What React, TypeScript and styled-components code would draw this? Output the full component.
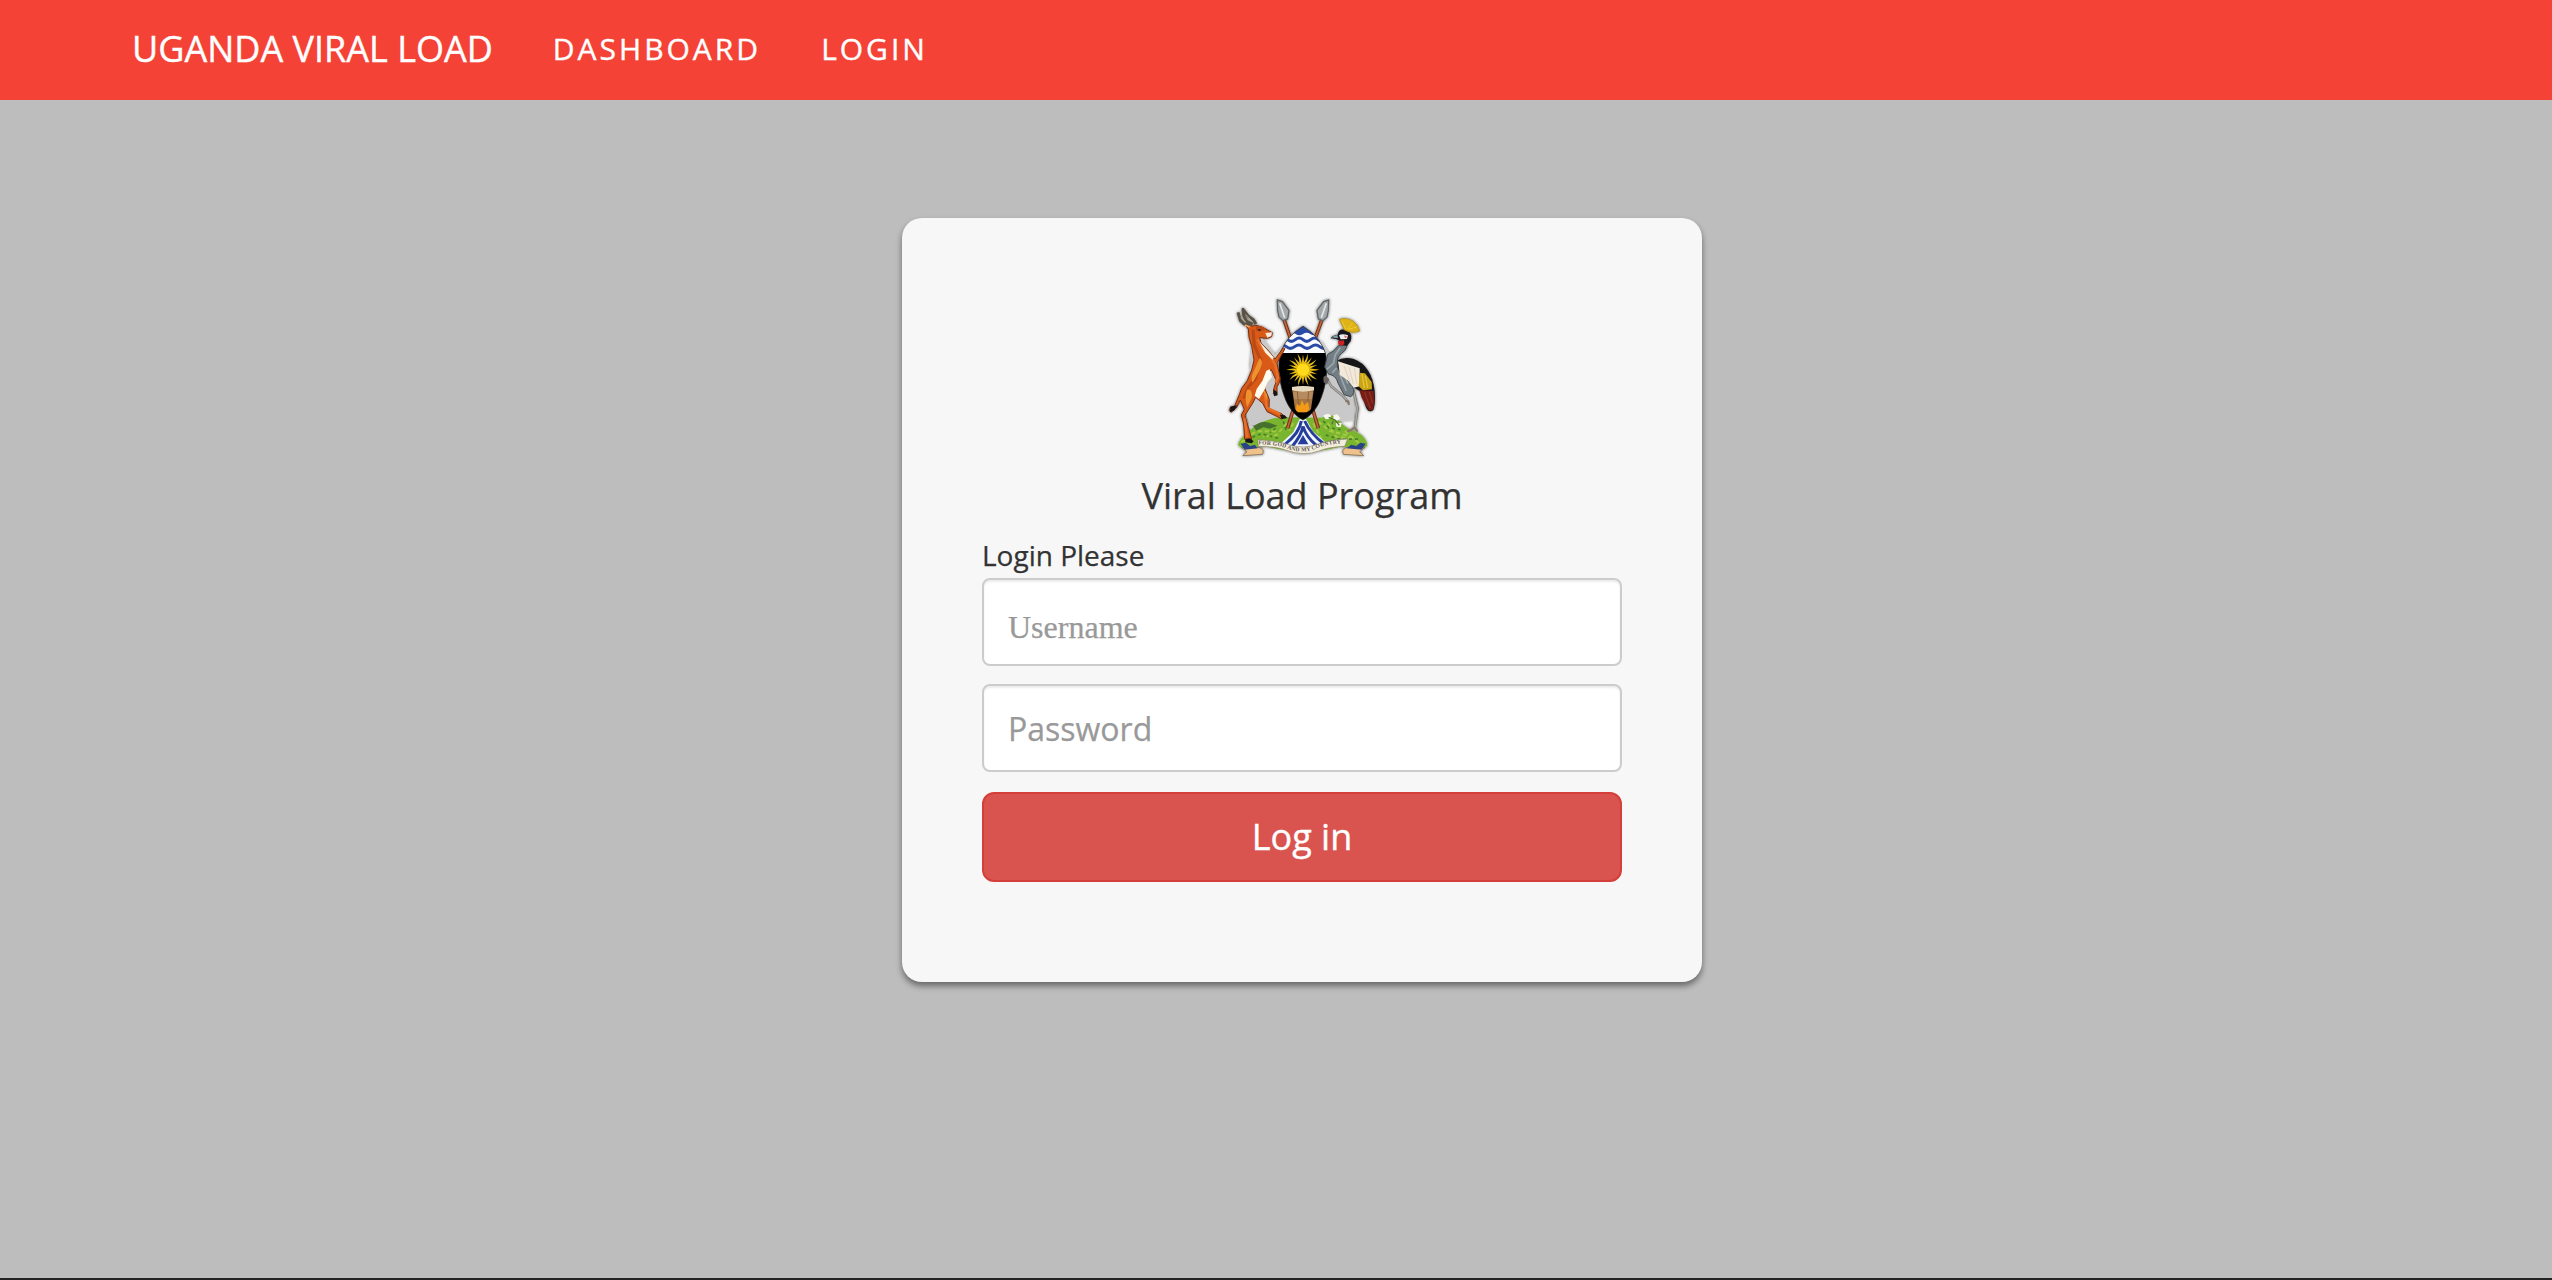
import React from 'react';
import styled, { createGlobalStyle } from 'styled-components';

const GlobalStyle = createGlobalStyle`
  * { box-sizing: border-box; }
  html, body { margin: 0; padding: 0; background: #bdbdbd; }
  body { font-family: "Open Sans", "Noto Sans", sans-serif; color: #333; }
`;

const Page = styled.div`
  height: 1280px;
  display: flex;
  flex-direction: column;
  background: #bdbdbd;
  border-bottom: 2px solid #242424;
`;

const Navbar = styled.nav`
  height: 100px;
  flex: none;
  display: flex;
  align-items: center;
  padding: 0 0 2px 132px;
  background: #f44336;
  -webkit-text-stroke: 0.4px #fff;
`;

const Brand = styled.a`
  color: #fff;
  font-size: 36px;
  line-height: 50px;
  margin-right: 60px;
  white-space: nowrap;
`;

const NavLinks = styled.div`
  display: flex;
  gap: 60px;
`;

const NavLink = styled.a`
  color: #fff;
  font-size: 30px;
  line-height: 42px;
  letter-spacing: 3px;
`;

const Main = styled.main`
  display: flex;
  justify-content: center;
  padding: 118px 0 0 52px;
`;

const Card = styled.section`
  width: 800px;
  height: 764px;
  padding: 82px 80px 0;
  display: flex;
  flex-direction: column;
  background: #f7f7f7;
  border-radius: 20px;
  box-shadow: 0 4px 6px rgba(0, 0, 0, 0.45);
`;

const Crest = styled.svg`
  display: block;
  align-self: center;
  width: 146px;
  height: 156px;
  overflow: visible;
`;

const Title = styled.h1`
  margin: 15px 0 14px;
  font-size: 36px;
  font-weight: 400;
  line-height: 50px;
  text-align: center;
  -webkit-text-stroke: 0.25px #333;
`;

const Hint = styled.p`
  margin: 0 0 3px;
  font-size: 28px;
  line-height: 40px;
  -webkit-text-stroke: 0.25px #333;
`;

const Field = styled.input<{ $serif?: boolean }>`
  width: 100%;
  height: 88px;
  margin: 0 0 ${(p) => (p.$serif ? 18 : 20)}px;
  padding: ${(p) => (p.$serif ? 10 : 0)}px 24px 0;
  border: 2px solid #ccc;
  border-radius: 8px;
  background: #fff;
  box-shadow: inset 0 2px 2px rgba(0, 0, 0, 0.075);
  font-family: ${(p) => (p.$serif ? '"Liberation Serif", serif' : '"Open Sans", sans-serif')};
  font-size: 32px;
  outline: none;
  &::placeholder { color: #999; opacity: 1; -webkit-text-stroke: 0.25px #999; }
`;

const Submit = styled.button`
  height: 90px;
  padding: 0;
  border: 2px solid #d43f3a;
  border-radius: 12px;
  background: #d9534f;
  color: #fff;
  font-family: inherit;
  font-size: 36px;
  line-height: 50px;
  -webkit-text-stroke: 0.4px #fff;
`;

const rays = Array.from({ length: 20 }, (_, i) => i * 18);

function CoatOfArms() {
  return (
    <Crest viewBox="57 45 438 468" role="img" aria-label="Coat of arms">
      <defs>
        <clipPath id="shield">
          <path d="M279 124C308 142 334 168 346 204C356 245 350 300 330 347C318 374 300 394 279 405C258 394 240 374 228 347C208 300 201 245 211 204C224 168 250 142 279 124Z" />
        </clipPath>
        <path id="motto" d="M145 478Q210 480 235 492Q280 509 325 488Q350 478 410 473" />
        <filter id="soft" x="-10%" y="-10%" width="120%" height="120%">
          <feGaussianBlur in="SourceAlpha" stdDeviation="4" result="halo" />
          <feComponentTransfer in="halo" result="edge">
            <feFuncA type="linear" slope="0.6" />
          </feComponentTransfer>
          <feGaussianBlur in="SourceGraphic" stdDeviation="2" result="body" />
          <feMerge>
            <feMergeNode in="edge" />
            <feMergeNode in="body" />
          </feMerge>
        </filter>
      </defs>
      <g filter="url(#soft)">
        {/* silver ground */}
        <path d="M190 215L230 170L335 170L370 225L430 320V405L120 420L105 370L140 270Z" fill="#c9c9ca" />
        <path d="M130 125L200 215L205 320L180 365L132 330L120 240Z" fill="#c9c9ca" />
        {/* mound */}
        <path d="M84 480C92 452 122 438 142 418Q190 393 230 397L335 398Q370 380 385 405Q405 431 438 440Q470 455 472 482L462 490L390 485Q280 516 170 484L95 490Z" fill="#79b52d" />
        <path d="M130 424Q155 405 177 413L203 422L180 431L160 427L139 437Z" fill="#45702d" />
        <path d="M105 457L142 439L200 439M230 415L200 450L160 455M325 410L360 438L420 453M353 414L378 455L438 461M93 471L130 455M405 438L447 475M250 414L238 437M310 415L334 460" fill="none" stroke="#a5c945" strokeWidth="6" strokeDasharray="13 8" />
        <path d="M110 463L155 446L205 460M347 450L390 463L450 462M340 408L356 428L392 434M220 409L229 438M197 430L180 443" fill="none" stroke="#477e2c" strokeWidth="5" strokeDasharray="9 9" />
        {/* river */}
        <path d="M269 402H288L308 438L353 478L330 490H225L208 480L250 441Z" fill="#f3f7ff" />
        <path d="M274 408Q269 443 224 479" fill="none" stroke="#263d9c" strokeWidth="9" />
        <path d="M284 408Q302 448 345 479" fill="none" stroke="#263d9c" strokeWidth="9" />
        <path d="M279 424Q275 451 246 485M279 424Q288 455 320 482" fill="none" stroke="#263d9c" strokeWidth="9" />
        <path d="M279 450L295 478H263Z" fill="#263d9c" />

        {/* crossed spears */}
        <path d="M220 98L242 162M338 98L315 162M249 376L233 430M309 376L325 430" fill="none" stroke="#7b2d18" strokeWidth="11" />
        <path d="M220 98L242 162M338 98L315 162M249 376L233 430M309 376L325 430" fill="none" stroke="#b9693d" strokeWidth="5" />
        <path d="M202 45L217 50L237 76L233 102L219 107L207 96L203 76Z" fill="#a4a8aa" stroke="#626668" strokeWidth="4" />
        <path d="M356 45L341 50L321 76L325 102L339 107L351 96L355 76Z" fill="#a4a8aa" stroke="#626668" strokeWidth="4" />
        <path d="M209 55L224 98M349 55L334 98" stroke="#e5e7e8" strokeWidth="5" />

        {/* shield */}
        <g clipPath="url(#shield)">
          <rect x="200" y="120" width="160" height="290" fill="#050505" />
          <rect x="200" y="120" width="160" height="84" fill="#f9fbff" />
          <path d="M235 147Q246 139 257 147T279 147T301 147T323 147V116H235Z" fill="#2c4ca5" />
          <path d="M211 164Q222 154 233 164T256 164T279 164T302 164T325 164T348 164M204 185Q217 175 229 185T254 185T279 185T304 185T329 185T354 185" fill="none" stroke="#2c4ca5" strokeWidth="9" />
          {rays.map((a) => (
            <path key={a} d={a % 36 ? 'M274 236L282 235Q284 217 278 203Q279 219 274 236Z' : 'M275 236L283 236L279 209Z'} transform={`rotate(${a} 279 254)`} fill="#e8bf12" />
          ))}
          <circle cx="279" cy="254" r="20" fill="#ffd91c" stroke="#dda900" strokeWidth="2" />
          <path d="M246 309Q279 299 312 309L303 372Q298 382 279 382Q260 382 255 372Z" fill="#a77443" />
          <path d="M249 320H309L305 342H253Z" fill="#b68b5e" />
          <path d="M262 317L267 380M296 317L291 380" stroke="#8c6239" strokeWidth="3" />
          <path d="M258 376L260 356L270 363L276 345L283 361L294 350L298 373L290 382H264Z" fill="#f39a18" />
          <path d="M246 316V306Q279 300 312 306V316Q280 324 246 316Z" fill="#e5d9c0" />
        </g>
        <path d="M279 124C308 142 334 168 346 204C356 245 350 300 330 347C318 374 300 394 279 405C258 394 240 374 228 347C208 300 201 245 211 204C224 168 250 142 279 124Z" fill="none" stroke="#222" strokeWidth="2" />

        {/* kob */}
        <path d="M115 132L105 119L116 116L126 124L137 121L153 125L172 135L187 143L185 155L173 160L149 158L153 174L178 200L195 222L220 188L225 191L201 234L211 282L208 293L201 306L201 329L190 327L192 308L199 288L184 254L172 262L170 286L164 309L178 343L177 371L213 385L226 395L214 402L202 395L171 380L158 355L137 337L128 355L105 391L116 430L125 463L115 469L104 463L101 417L94 390L103 373L91 345L79 369L63 382L58 377L61 367L74 363L88 329L95 310L112 287L125 255L132 225L125 184L117 157Z" fill="#d95a17" stroke="#713017" strokeWidth="3" strokeLinejoin="round" />
        <path d="M129 134L133 181L152 225L136 282L115 306L102 340" fill="none" stroke="#b94814" strokeWidth="9" />
        <path d="M142 163L158 191L183 218L196 240L204 277L196 292M163 325L171 368L211 387M104 401L111 456" fill="none" stroke="#e8702a" strokeWidth="7" />
        <path d="M149 219Q163 228 148 257L128 293Q119 279 133 255ZM111 314Q127 310 126 337L112 366Q102 338 111 314ZM158 312Q175 324 172 348Z" fill="#ec922f" />
        <path d="M169 257L179 253L186 276L173 291L163 315L147 342L134 332L140 312L157 288Z" fill="#fffbed" />
        <path d="M149 171L166 189L191 217L188 224L166 203Z" fill="#fff2df" />
        <path d="M137 126L154 123L170 131L157 138L140 139Z" fill="#b94818" />
        <path d="M166 144L186 142L184 153L172 158Z" fill="#f8e9d8" />
        <path d="M142 132L154 134L148 139Z" fill="#241b18" />
        <path d="M119 120L102 117L91 106L84 82M128 118L110 109L101 92L99 73L115 94L130 104L138 117" fill="none" stroke="#5a5144" strokeWidth="9" strokeLinejoin="round" />
        <path d="M108 112L92 98M128 111L107 88" stroke="#a29b83" strokeWidth="3" />
        <path d="M105 120L119 126" stroke="#e8a264" strokeWidth="5" />
        <path d="M190 313L201 320L203 331L192 334ZM210 389L224 391L232 399L215 403ZM106 462L120 460L131 469L125 475L106 472ZM61 365L82 361L73 376L60 382Z" fill="#161819" />

        {/* crested crane */}
        <path d="M430 315L443 370L434 432M411 292L416 329M350 280L364 304L400 334L417 354" fill="none" stroke="#74777a" strokeWidth="8" />
        <path d="M430 315L442 370L435 430M350 280L364 304L400 334L416 352" fill="none" stroke="#b1aba0" strokeWidth="4" />
        <path d="M347 271L358 283L351 299L341 292L340 277Z" fill="#67615b" />
        <path d="M434 427L423 435L411 440M434 428L443 440M417 350L406 347M414 350L417 360" fill="none" stroke="#8a7766" strokeWidth="6" />
        <path d="M379 228Q402 213 431 222Q458 231 475 258Q489 279 494 318Q497 355 490 375Q474 387 465 359L454 321L430 307Q409 283 384 255Z" fill="#171719" />
        <path d="M386 181L412 180Q408 198 394 206Q381 216 382 234Q379 248 397 271L427 303Q438 326 422 335L402 329L384 294Q378 270 356 268L344 246L353 208Q371 202 386 181Z" fill="#727d84" stroke="#42494d" strokeWidth="3" />
        <path d="M391 188L376 209L370 236L350 253M380 249L367 263M388 263L397 288L409 318M401 268L414 296" fill="none" stroke="#9ba7ad" strokeWidth="5" />
        <path d="M384 229L416 239L449 250L449 304L431 308L413 286L390 270Z" fill="#f3e9da" />
        <path d="M402 243L421 293M417 247L430 297M433 248L440 296" stroke="#ded3c2" strokeWidth="3" />
        <path d="M449 263L465 265L485 291L486 313L459 316L446 304Z" fill="#caa416" />
        <path d="M456 267L463 309M466 272L473 309" stroke="#e3c736" strokeWidth="4" />
        <path d="M448 316L491 317L494 349L489 374L478 377L467 360L455 338Z" fill="#741d17" />
        <path d="M463 321L481 369M478 321L488 355" stroke="#8e3324" strokeWidth="4" />
        <path d="M383 149Q386 131 403 134L418 142Q428 151 422 169L411 182L390 180L391 169L379 162L362 160Q363 153 383 149Z" fill="#15191b" />
        <path d="M362 157L382 150L384 160Z" fill="#86a4a5" />
        <path d="M387 151Q397 144 414 151L411 162L392 163Z" fill="#eceff0" />
        <path d="M402 151L413 155L405 160Z" fill="#dc716c" />
        <path d="M384 168L402 166L403 178L393 183L385 178Z" fill="#cb2026" />
        <path d="M403 135L388 103Q410 96 429 108Q444 118 449 138Q426 147 403 135Z" fill="#dfb215" stroke="#a98818" strokeWidth="2" />
        <path d="M407 132L396 108M412 132L428 113M414 133L441 126" stroke="#eccb38" strokeWidth="3" />

        {/* cotton and coffee */}
        <path d="M340 392Q350 383 363 391Q363 404 347 403ZM371 390L382 388L391 400L382 407L370 402ZM378 414L395 414L392 426L379 425Z" fill="#f8f7ee" />
        <path d="M356 397L375 405L388 421M370 407L366 418" fill="none" stroke="#54733a" strokeWidth="4" />

        {/* ribbon */}
        <path d="M95 488L150 488L160 496L158 508L98 512L111 500ZM464 488L408 488L398 496L400 508L461 512L449 500Z" fill="#efc28c" stroke="#6b5a42" strokeWidth="2" />
        <path d="M92 476L108 473L120 483L135 479L142 490L104 494ZM467 476L451 473L439 483L424 479L410 490L455 494Z" fill="#2c4288" />
        <path d="M143 464Q205 468 236 479Q280 494 324 477Q361 464 413 462L404 484Q357 486 330 497Q280 516 226 495Q201 485 145 484Z" fill="#f4eddd" stroke="#857e6c" strokeWidth="2" />
      </g>
      <text fontFamily="Liberation Serif, serif" fontSize="17" fontWeight="700" fill="#5a574f" textLength="254">
        <textPath href="#motto">FOR GOD AND MY COUNTRY</textPath>
      </text>
    </Crest>
  );
}

export default function App() {
  return (
    <>
      <GlobalStyle />
      <Page>
        <Navbar>
          <Brand>UGANDA VIRAL LOAD</Brand>
          <NavLinks>
            <NavLink>DASHBOARD</NavLink>
            <NavLink>LOGIN</NavLink>
          </NavLinks>
        </Navbar>
        <Main>
          <Card>
            <CoatOfArms />
            <Title>Viral Load Program</Title>
            <Hint>Login Please</Hint>
            <Field $serif type="text" placeholder="Username" />
            <Field type="password" placeholder="Password" />
            <Submit type="button">Log in</Submit>
          </Card>
        </Main>
      </Page>
    </>
  );
}
